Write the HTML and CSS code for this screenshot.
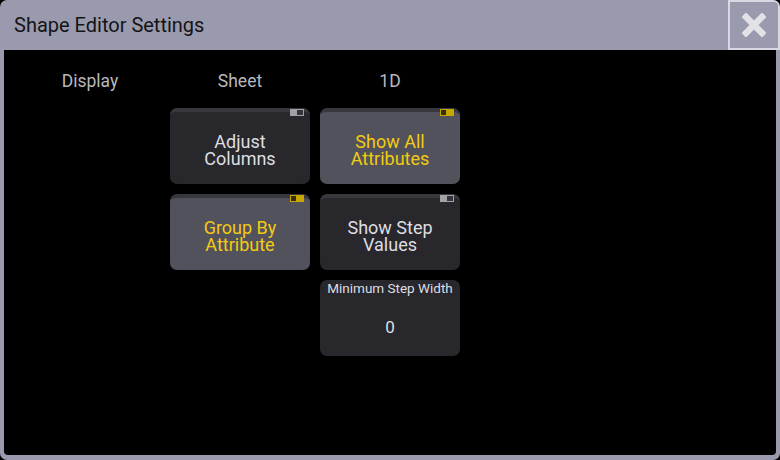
FILE: index.html
```html
<!DOCTYPE html>
<html lang="en">
<head>
    <meta charset="UTF-8">
    <title>Shape Editor Settings</title>
    <link rel="stylesheet" href="styles.css">
</head>
<body>
    <div class="window">
        <div class="titlebar">
            <div class="title">Shape Editor Settings</div>
            <div class="close">
                <svg width="24" height="24" viewBox="0 0 24 24">
                    <path d="M4 4 L20 20 M20 4 L4 20" stroke="#e2e2e6" stroke-width="6.5" stroke-linecap="square"/>
                </svg>
            </div>
        </div>
        <div class="content">
            <div class="column">
                <div class="col-head">Display</div>
            </div>
            <div class="column">
                <div class="col-head">Sheet</div>
                <div class="btn">
                    <span class="toggle"></span>
                    <span class="label">Adjust<br>Columns</span>
                </div>
                <div class="btn on">
                    <span class="toggle"></span>
                    <span class="label">Group By<br>Attribute</span>
                </div>
            </div>
            <div class="column">
                <div class="col-head">1D</div>
                <div class="btn on">
                    <span class="toggle"></span>
                    <span class="label">Show All<br>Attributes</span>
                </div>
                <div class="btn">
                    <span class="toggle"></span>
                    <span class="label">Show Step<br>Values</span>
                </div>
                <div class="field">
                    <div class="field-name">Minimum Step Width</div>
                    <div class="field-value">0</div>
                </div>
            </div>
        </div>
    </div>
</body>
</html>
```

FILE: styles.css
```css
body {
    margin: 0;
    background: #000;
    font-family: Roboto, "Liberation Sans", sans-serif;
}

.window {
    width: 780px;
    height: 460px;
    box-sizing: border-box;
    background: #9a9aae;
    border-radius: 7px;
    padding: 0 4px 5px;
    display: flex;
    flex-direction: column;
    overflow: hidden;
}

.titlebar {
    height: 50px;
    margin: 0 -4px;
    display: flex;
    align-items: center;
    justify-content: space-between;
    flex-shrink: 0;
}

.title {
    padding-left: 14px;
    font-size: 20px;
    color: #141416;
}

.close {
    width: 48px;
    height: 46px;
    border: 2px solid #d8d8e2;
    border-top-right-radius: 6px;
    display: flex;
    align-items: center;
    justify-content: center;
}

.content {
    flex: 1;
    background: #000;
    border-radius: 0 0 4px 4px;
    padding: 22px 0 0 16px;
    display: flex;
    gap: 10px;
    align-items: flex-start;
}

.column {
    width: 140px;
    display: flex;
    flex-direction: column;
    gap: 10px;
}

.col-head {
    height: 18px;
    line-height: 18px;
    margin-bottom: 8px;
    text-align: center;
    font-size: 17.5px;
    color: #b8b8bc;
}

.btn {
    position: relative;
    height: 72px;
    border-top: 4px solid #37373e;
    border-radius: 7px;
    background: #27272c;
    display: flex;
    align-items: center;
    justify-content: center;
    text-align: center;
    font-size: 18px;
    line-height: 17px;
    color: #dedee2;
}

.btn .label {
    padding-top: 3px;
}

.btn.on {
    background: #52525c;
    color: #f4cb12;
}

.toggle {
    position: absolute;
    top: -3px;
    right: 6px;
    width: 12px;
    height: 5px;
    border: 1px solid #a2a2a6;
    background: linear-gradient(to right, #a2a2a6 50%, #34343a 50%);
}

.on .toggle {
    border-color: #c8a600;
    background: linear-gradient(to right, #34300a 45%, #c8a600 45%);
}

.field {
    height: 76px;
    border-radius: 7px;
    background: #27272c;
    text-align: center;
    color: #dedee2;
}

.field-name {
    font-size: 13.5px;
    line-height: 16px;
}

.field-value {
    margin-top: 22px;
    font-size: 17px;
    line-height: 18px;
}
```
